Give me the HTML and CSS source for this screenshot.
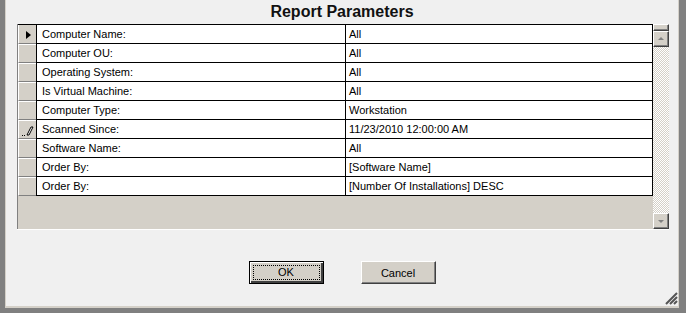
FILE: index.html
```html
<!DOCTYPE html>
<html lang="en">
<head>
  <meta charset="UTF-8" />
  <title>Report Parameters</title>
  <link rel="stylesheet" href="styles.css">
</head>
<body>
  <div class="window">
    <div class="pane">
      <h1 class="title">Report Parameters</h1>

      <div class="grid">
        <div class="sheet">
          <div class="rows">
            <div class="row">
              <div class="hdr"><span class="pointer"></span></div>
              <div class="cell name">Computer Name:</div>
              <div class="cell value">All</div>
            </div>
            <div class="row">
              <div class="hdr"></div>
              <div class="cell name">Computer OU:</div>
              <div class="cell value">All</div>
            </div>
            <div class="row">
              <div class="hdr"></div>
              <div class="cell name">Operating System:</div>
              <div class="cell value">All</div>
            </div>
            <div class="row">
              <div class="hdr"></div>
              <div class="cell name">Is Virtual Machine:</div>
              <div class="cell value">All</div>
            </div>
            <div class="row">
              <div class="hdr"></div>
              <div class="cell name">Computer Type:</div>
              <div class="cell value">Workstation</div>
            </div>
            <div class="row">
              <div class="hdr">
                <svg class="pencil" width="13" height="11" viewBox="0 0 13 11">
                  <rect x="1" y="9" width="1" height="1" fill="#000"/>
                  <rect x="3" y="9" width="1" height="1" fill="#000"/>
                  <path d="M6 9 L10 1 L12 1 L8 9 Z" fill="#fff" stroke="#000" stroke-width="1"/>
                </svg>
              </div>
              <div class="cell name">Scanned Since:</div>
              <div class="cell value">11/23/2010 12:00:00 AM</div>
            </div>
            <div class="row">
              <div class="hdr"></div>
              <div class="cell name">Software Name:</div>
              <div class="cell value">All</div>
            </div>
            <div class="row">
              <div class="hdr"></div>
              <div class="cell name">Order By:</div>
              <div class="cell value">[Software Name]</div>
            </div>
            <div class="row">
              <div class="hdr"></div>
              <div class="cell name">Order By:</div>
              <div class="cell value">[Number Of Installations] DESC</div>
            </div>
          </div>
        </div>

        <div class="scroll">
          <div class="thumb"></div>
          <div class="sbtn"><span class="arrow up"></span></div>
          <div class="track"></div>
          <div class="sbtn"><span class="arrow down"></span></div>
        </div>
      </div>

      <div class="buttons">
        <button class="btn default"><span class="focus">OK</span></button>
        <button class="btn">Cancel</button>
      </div>

      <svg class="grip" width="13" height="13" viewBox="0 0 13 13">
        <path d="M12 1 L1 12 M12 5 L5 12 M12 9 L9 12" stroke="#555" stroke-width="2"/>
      </svg>
    </div>
  </div>
</body>
</html>
```

FILE: styles.css
```css
/* fenetre de dialogue */
body {
  margin: 0;
  background-color: #808080;
  font-family: "Liberation Sans", Arial, sans-serif;
}

.window {
  box-sizing: border-box;
  width: 686px;
  height: 313px;
  padding: 0 7px 5px 5px;
}

.pane {
  position: relative;
  box-sizing: border-box;
  height: 308px;
  background-color: #f0f0f0;
  border-left: 1px solid #d4d0c8;
  border-right: 1px solid #d4d0c8;
  border-bottom: 2px solid #d4d0c8;
  padding-left: 11px;
}

/* titre */
.title {
  margin: 0;
  height: 24px;
  line-height: 23px;
  font-size: 16px;
  font-weight: bold;
  text-align: center;
  color: #111;
  padding-right: 11px;
}

/* grille des parametres */
.grid {
  display: flex;
  width: 652px;
  height: 205px;
  border-bottom: 1px solid #fff;
}

.sheet {
  width: 636px;
  background-color: #d4d0c8;
  border-left: 1px solid #808080;
  box-sizing: border-box;
}

.rows {
  border-top: 1px solid #000;
}

.row {
  display: flex;
  height: 19px;
  font-size: 11px;
  line-height: 18px;
}

.hdr {
  position: relative;
  box-sizing: border-box;
  width: 18px;
  height: 19px;
  background-color: #d4d0c8;
  border-top: 1px solid #fff;
  border-left: 1px solid #fff;
  border-bottom: 1px solid #808080;
}

.row:first-child .hdr {
  border-top: none;
}

.pointer {
  position: absolute;
  left: 7px;
  top: 6px;
  width: 0;
  height: 0;
  border-top: 4px solid transparent;
  border-bottom: 4px solid transparent;
  border-left: 5px solid #000;
}

.pencil {
  position: absolute;
  left: 2px;
  top: 5px;
}

.cell {
  box-sizing: border-box;
  height: 19px;
  background-color: #fff;
  border-left: 1px solid #000;
  border-bottom: 1px solid #000;
  color: #000;
  white-space: nowrap;
  overflow: hidden;
}

.name {
  width: 309px;
  padding-left: 5px;
}

.value {
  width: 308px;
  padding-left: 3px;
  border-right: 1px solid #000;
}

/* barre de defilement */
.scroll {
  display: flex;
  flex-direction: column;
  width: 16px;
  height: 205px;
  background: repeating-conic-gradient(#fff 0 25%, #d4d0c8 0 50%) 0 0 / 2px 2px;
}

.thumb,
.sbtn {
  box-sizing: border-box;
  background-color: #d4d0c8;
  border-top: 1px solid #fff;
  border-left: 1px solid #fff;
  border-right: 1px solid #404040;
  border-bottom: 1px solid #404040;
  box-shadow: inset -1px -1px 0 #808080;
}

.thumb {
  height: 7px;
}

.sbtn {
  position: relative;
  height: 16px;
}

.track {
  flex: 1;
}

.arrow {
  position: absolute;
  left: 4px;
  width: 0;
  height: 0;
  border-left: 3px solid transparent;
  border-right: 3px solid transparent;
}

.arrow.up {
  top: 5px;
  border-bottom: 3px solid #808080;
}

.arrow.down {
  top: 6px;
  border-top: 3px solid #808080;
}

/* boutons */
.buttons {
  display: flex;
  justify-content: center;
  gap: 37px;
  margin-top: 31px;
  padding-right: 11px;
}

.btn {
  box-sizing: border-box;
  width: 75px;
  height: 23px;
  padding: 0;
  background-color: #d4d0c8;
  border-top: 1px solid #fff;
  border-left: 1px solid #fff;
  border-right: 1px solid #404040;
  border-bottom: 1px solid #404040;
  box-shadow: inset -1px -1px 0 #808080;
  font-family: "Liberation Sans", Arial, sans-serif;
  font-size: 11px;
  color: #000;
}

.btn.default {
  border: 1px solid #000;
  box-shadow: inset 1px 1px 0 #fff, inset -2px -2px 0 #404040;
}

.focus {
  display: block;
  margin: 3px;
  height: 13px;
  line-height: 13px;
  border: 1px dotted #000;
}

.grip {
  position: absolute;
  right: 0;
  bottom: 1px;
}
```
